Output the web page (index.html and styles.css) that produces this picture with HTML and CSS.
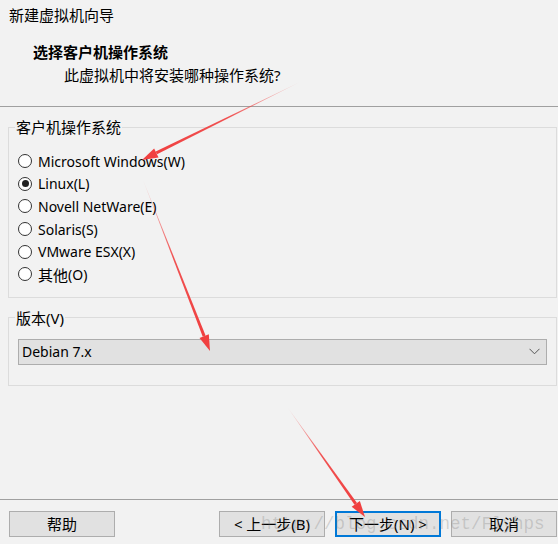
FILE: index.html
```html
<!DOCTYPE html>
<html lang="zh-CN">
<head>
  <meta charset="UTF-8" />
  <title>新建虚拟机向导</title>
  <link rel="stylesheet" href="styles.css">
</head>
<body>
  <div class="title">新建虚拟机向导</div>

  <div class="header">
    <h1>选择客户机操作系统</h1>
    <p>此虚拟机中将安装哪种操作系统?</p>
  </div>

  <main class="content">
    <fieldset class="group os">
      <legend>客户机操作系统</legend>
      <label class="radio"><span class="dot"></span>Microsoft Windows(W)</label>
      <label class="radio"><span class="dot checked"></span>Linux(L)</label>
      <label class="radio"><span class="dot"></span>Novell NetWare(E)</label>
      <label class="radio"><span class="dot"></span>Solaris(S)</label>
      <label class="radio"><span class="dot"></span>VMware ESX(X)</label>
      <label class="radio"><span class="dot"></span><span class="cjk">其他</span>(O)</label>
    </fieldset>

    <fieldset class="group version">
      <legend>版本(V)</legend>
      <div class="select">
        <span>Debian 7.x</span>
        <svg width="11" height="7" viewBox="0 0 11 7"><path d="M0.5 0.8 L5.5 5.8 L10.5 0.8" fill="none" stroke="#555" stroke-width="1"/></svg>
      </div>
    </fieldset>
  </main>

  <div class="footer">
    <button class="btn">帮助</button>
    <button class="btn prev">&lt; 上一步(B)</button>
    <button class="btn primary">下一步(N) &gt;</button>
    <button class="btn">取消</button>
  </div>

  <!-- annotation arrows drawn over the screenshot -->
  <svg class="marks" width="558" height="544" viewBox="0 0 558 544">
    <defs>
      <linearGradient id="a1" gradientUnits="userSpaceOnUse" x1="300" y1="82" x2="156" y2="153">
        <stop offset="0" stop-color="#f04040" stop-opacity="0.15"/>
        <stop offset="0.5" stop-color="#f04040" stop-opacity="0.9"/>
        <stop offset="1" stop-color="#f04040"/>
      </linearGradient>
      <linearGradient id="a2" gradientUnits="userSpaceOnUse" x1="143" y1="180" x2="204" y2="336">
        <stop offset="0" stop-color="#f04040" stop-opacity="0.15"/>
        <stop offset="0.5" stop-color="#f04040" stop-opacity="0.9"/>
        <stop offset="1" stop-color="#f04040"/>
      </linearGradient>
      <linearGradient id="a3" gradientUnits="userSpaceOnUse" x1="288" y1="408" x2="356" y2="504">
        <stop offset="0" stop-color="#f04040" stop-opacity="0.15"/>
        <stop offset="0.5" stop-color="#f04040" stop-opacity="0.9"/>
        <stop offset="1" stop-color="#f04040"/>
      </linearGradient>
    </defs>
    <polygon points="300,82 155.69,151.57 157.01,154.27" fill="url(#a1)"/>
    <polygon points="142,160 154.14,148.44 158.56,157.40" fill="#f04040"/>
    <polygon points="143,180 202.76,336.65 205.56,335.55" fill="url(#a2)"/>
    <polygon points="210,351 199.50,337.92 208.82,334.28" fill="#f04040"/>
    <polygon points="288,408 354.54,504.80 357.00,503.06" fill="url(#a3)"/>
    <polygon points="365,517 351.69,506.82 359.85,501.05" fill="#f04040"/>
  </svg>

  <div class="watermark">http://blog.csdn.net/Flyhps</div>
</body>
</html>
```

FILE: styles.css
```css
html, body {
  margin: 0;
  padding: 0;
}
body {
  width: 558px;
  height: 544px;
  display: flex;
  flex-direction: column;
  background: #f2f2f2;
  font-family: "Noto Sans", "Noto Sans CJK SC", sans-serif;
  font-size: 15px;
  color: #000;
  position: relative;
  overflow: hidden;
}
.title {
  height: 30px;
  line-height: 30px;
  padding-left: 9px;
}
.header {
  padding: 12px 0 21px;
  border-bottom: 1px solid #a0a0a0;
}
.header h1 {
  margin: 0;
  padding-left: 33px;
  font-size: 15px;
  font-weight: bold;
  line-height: 20px;
}
.header p {
  margin: 3px 0 0;
  padding-left: 64px;
  line-height: 20px;
}
.content {
  flex: 1;
  padding-top: 10px;
}
.group {
  margin: 0 1px 0 8px;
  padding: 0 9px;
  border: 1px solid #dcdcdc;
  min-width: 0;
}
.group legend {
  padding: 0 1px;
  margin-left: -3px;
  line-height: 20px;
}
.os {
  padding-top: 13px;
  padding-bottom: 11px;
}
.version {
  margin-top: 10px;
  padding-top: 11px;
  padding-bottom: 20px;
}
.radio {
  display: flex;
  align-items: center;
  height: 22.6px;
  font-size: 14px;
}
.cjk {
  font-size: 15px;
}
.dot {
  width: 12px;
  height: 12px;
  border: 1px solid #333;
  border-radius: 50%;
  background: #fff;
  margin-right: 6px;
  position: relative;
}
.dot.checked::after {
  content: "";
  position: absolute;
  left: 2.5px;
  top: 2.5px;
  width: 7px;
  height: 7px;
  border-radius: 50%;
  background: #222;
}
.select {
  height: 24px;
  border: 1px solid #adadad;
  background: #e1e1e1;
  display: flex;
  align-items: center;
  justify-content: space-between;
  padding: 0 6px 0 3px;
  font-size: 14px;
}
.footer {
  height: 33px;
  border-top: 1px solid #a0a0a0;
  padding: 11px 1px 0 9px;
  display: flex;
  align-items: flex-start;
  gap: 10px;
}
.btn {
  width: 106px;
  height: 26px;
  border: 1px solid #adadad;
  background: #e1e1e1;
  font-family: inherit;
  font-size: 15px;
  color: #000;
  padding: 0;
  line-height: 22px;
}
.btn.prev {
  margin-left: auto;
}
.btn.primary {
  border: 2px solid #0078d7;
}
.marks {
  position: absolute;
  left: 0;
  top: 0;
  pointer-events: none;
}
.watermark {
  position: absolute;
  left: 261px;
  top: 513px;
  font-family: "Liberation Mono", monospace;
  font-size: 17.5px;
  line-height: 22px;
  color: rgba(120, 120, 120, 0.28);
  pointer-events: none;
  white-space: nowrap;
}
```
